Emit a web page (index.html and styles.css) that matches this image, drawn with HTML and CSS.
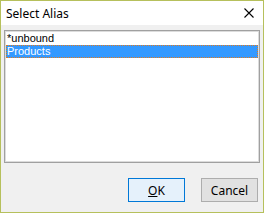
FILE: index.html
```html
<!DOCTYPE html>
<html lang="en">

<head>
    <meta charset="UTF-8">
    <title>Select Alias</title>
    <link rel="stylesheet" href="styles.css">
</head>

<body>
    <div class="dialog">
        <!-- Title bar -->
        <div class="titlebar">
            <span class="title">Select Alias</span>
            <span class="close">
                <svg width="10" height="10" viewBox="0 0 10 10">
                    <path d="M0.5 0.5 L9.5 9.5 M9.5 0.5 L0.5 9.5" stroke="#000" stroke-width="1.1" fill="none" />
                </svg>
            </span>
        </div>

        <div class="client">
            <!-- Alias list -->
            <div class="list">
                <div class="item">*unbound</div>
                <div class="item selected">Products</div>
            </div>

            <div class="buttons">
                <button class="btn default"><u>O</u>K</button>
                <button class="btn">Cancel</button>
            </div>
        </div>
    </div>
</body>

</html>
```

FILE: styles.css
```css
body {
    margin: 0;
    padding: 0;
    background: #fff;
}

.dialog {
    box-sizing: border-box;
    width: 264px;
    height: 213px;
    border: 1px solid #b6c05c;
    background-color: #f0f0f0;
    display: flex;
    flex-direction: column;
}

.titlebar {
    height: 24px;
    background-color: #fff;
    display: flex;
    align-items: center;
    justify-content: space-between;
    padding-left: 5px;
    padding-right: 9px;
}

.title {
    font-family: "Noto Sans", "Open Sans", sans-serif;
    font-size: 12px;
    color: #000;
}

.close {
    display: flex;
    width: 10px;
    height: 10px;
}

.client {
    flex: 1;
    padding: 5px 3px 0 3px;
    display: flex;
    flex-direction: column;
}

.list {
    box-sizing: border-box;
    height: 133px;
    border: 1px solid #a0a0a0;
    box-shadow: inset 0 0 0 1px #dcdcdc;
    background-color: #fff;
    padding: 1px 1px;
}

.item {
    height: 13px;
    line-height: 13px;
    padding-left: 1px;
    font-family: "Liberation Sans", Arial, sans-serif;
    font-size: 11px;
    color: #000;
}

.item.selected {
    box-sizing: border-box;
    background-color: #3399ff;
    color: #fff;
    border: 1px dotted #e07a1f;
    line-height: 11px;
    padding-left: 0;
}

.buttons {
    display: flex;
    justify-content: flex-end;
    gap: 16px;
    margin-top: 15px;
    padding-right: 2px;
}

.btn {
    box-sizing: border-box;
    width: 57px;
    height: 24px;
    margin: 0;
    padding: 0;
    border: 1px solid #adadad;
    background-color: #e1e1e1;
    font-family: "Noto Sans", "Open Sans", sans-serif;
    font-size: 12px;
    color: #000;
}

.btn.default {
    border-color: #0078d7;
    background-color: #e5f1fb;
}
```
